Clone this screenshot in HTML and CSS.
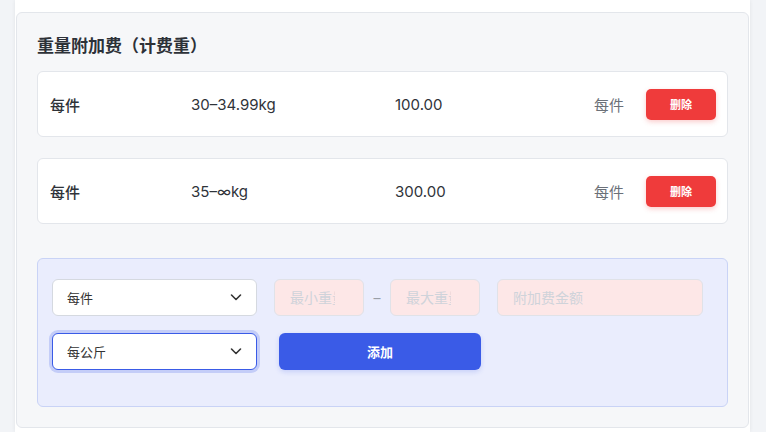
FILE: index.html
```html
<!DOCTYPE html>
<html lang="zh-CN">

<head>
    <meta charset="UTF-8">
    <meta name="viewport" content="width=device-width, initial-scale=1.0">
    <title>重量附加费</title>
    <link rel="stylesheet" href="styles.css">
</head>

<body>
    <div class="page">
        <div class="section">
            <h2 class="section-title">重量附加费（计费重）</h2>

            <div class="fee-row">
                <span class="cell-type">每件</span>
                <span class="cell-range">30–34.99kg</span>
                <span class="cell-price">100.00</span>
                <span class="cell-unit">每件</span>
                <button class="btn-delete">删除</button>
            </div>

            <div class="fee-row">
                <span class="cell-type">每件</span>
                <span class="cell-range">35–∞kg</span>
                <span class="cell-price">300.00</span>
                <span class="cell-unit">每件</span>
                <button class="btn-delete">删除</button>
            </div>

            <!-- add new fee -->
            <div class="add-panel">
                <div class="form-row">
                    <div class="select-wrap">
                        <select class="select">
                            <option>每件</option>
                        </select>
                        <svg class="chevron" width="14" height="14" viewBox="0 0 14 14"><path d="M2.5 5l4.5 4.5L11.5 5" fill="none" stroke="#333" stroke-width="1.6" stroke-linecap="round" stroke-linejoin="round"/></svg>
                    </div>
                    <input type="text" class="input input-small" placeholder="最小重量">
                    <span class="dash">–</span>
                    <input type="text" class="input input-small" placeholder="最大重量">
                    <input type="text" class="input input-amount" placeholder="附加费金额">
                </div>
                <div class="form-row">
                    <div class="select-wrap">
                        <select class="select focused">
                            <option>每公斤</option>
                        </select>
                        <svg class="chevron" width="14" height="14" viewBox="0 0 14 14"><path d="M2.5 5l4.5 4.5L11.5 5" fill="none" stroke="#333" stroke-width="1.6" stroke-linecap="round" stroke-linejoin="round"/></svg>
                    </div>
                    <button class="btn-add">添加</button>
                </div>
            </div>
        </div>
    </div>
</body>

</html>
```

FILE: styles.css
```css
body {
    margin: 0;
    font-family: Inter, "Noto Sans CJK SC", sans-serif;
    background-color: #f2f4f7;
    color: #2f3339;
}

.page {
    margin-left: 15px;
    width: 735px;
    height: 432px;
    padding-top: 12px;
    box-sizing: border-box;
    background-color: #fff;
    box-shadow: 0 0 4px rgba(0, 0, 0, 0.07);
    overflow: hidden;
}

.section {
    margin-left: 1px;
    width: 733px;
    box-sizing: border-box;
    padding: 22px 20px 20px;
    background-color: #f6f7f9;
    border: 1px solid #e3e6eb;
    border-radius: 6px;
}

.section-title {
    margin: 0 0 14px;
    font-size: 17px;
    line-height: 22px;
    font-weight: 700;
    color: #2d3138;
}

.fee-row {
    display: flex;
    align-items: center;
    height: 66px;
    box-sizing: border-box;
    padding: 0 11px 0 12px;
    margin-bottom: 21px;
    background-color: #fff;
    border: 1px solid #e3e6eb;
    border-radius: 6px;
    font-size: 15px;
}

.cell-type {
    width: 141px;
    font-weight: 500;
}

.cell-range {
    width: 204px;
}

.cell-price {
    flex: 1;
}

.cell-unit {
    margin-right: 22px;
    color: #6b7078;
}

.btn-delete {
    width: 70px;
    height: 31px;
    border: none;
    border-radius: 5px;
    background-color: #ef3b3b;
    color: #fff;
    font-family: inherit;
    font-size: 11px;
    font-weight: 700;
    box-shadow: 0 2px 5px rgba(239, 59, 59, 0.25);
    cursor: pointer;
}

.add-panel {
    margin-top: 34px;
    padding: 20px 14px 36px;
    background-color: #eaedfd;
    border: 1px solid #c9d3f6;
    border-radius: 6px;
}

.form-row {
    display: flex;
    align-items: center;
}

.form-row + .form-row {
    margin-top: 17px;
}

.select-wrap {
    position: relative;
    width: 205px;
    margin-right: 17px;
}

.select {
    display: block;
    width: 100%;
    height: 37px;
    padding: 0 14px;
    border: 1px solid #d5d9e0;
    border-radius: 6px;
    background-color: #fff;
    font-family: inherit;
    font-size: 13px;
    color: #333;
    appearance: none;
    -webkit-appearance: none;
    outline: none;
}

.select.focused {
    border-color: #3a5be7;
    box-shadow: 0 0 0 3px #c4cdf8;
}

.chevron {
    position: absolute;
    right: 14px;
    top: 11px;
    pointer-events: none;
}

.input {
    height: 37px;
    box-sizing: border-box;
    padding: 0 14px 0 15px;
    border: 1px solid #e0e2e8;
    border-radius: 6px;
    background-color: #fde7e7;
    font-family: inherit;
    font-size: 14px;
    outline: none;
}

.input::placeholder {
    color: #cfd3da;
}

.input-small {
    width: 90px;
    padding-right: 28px;
}

.dash {
    width: 26px;
    text-align: center;
    color: #9a9fa8;
    font-size: 14px;
}

.input-amount {
    width: 206px;
    margin-left: 17px;
}

.btn-add {
    width: 202px;
    height: 37px;
    margin-left: 5px;
    border: none;
    border-radius: 6px;
    background-color: #3a5be7;
    color: #fff;
    font-family: inherit;
    font-size: 13px;
    font-weight: 700;
    box-shadow: 0 2px 5px rgba(58, 91, 231, 0.2);
    cursor: pointer;
}
```
